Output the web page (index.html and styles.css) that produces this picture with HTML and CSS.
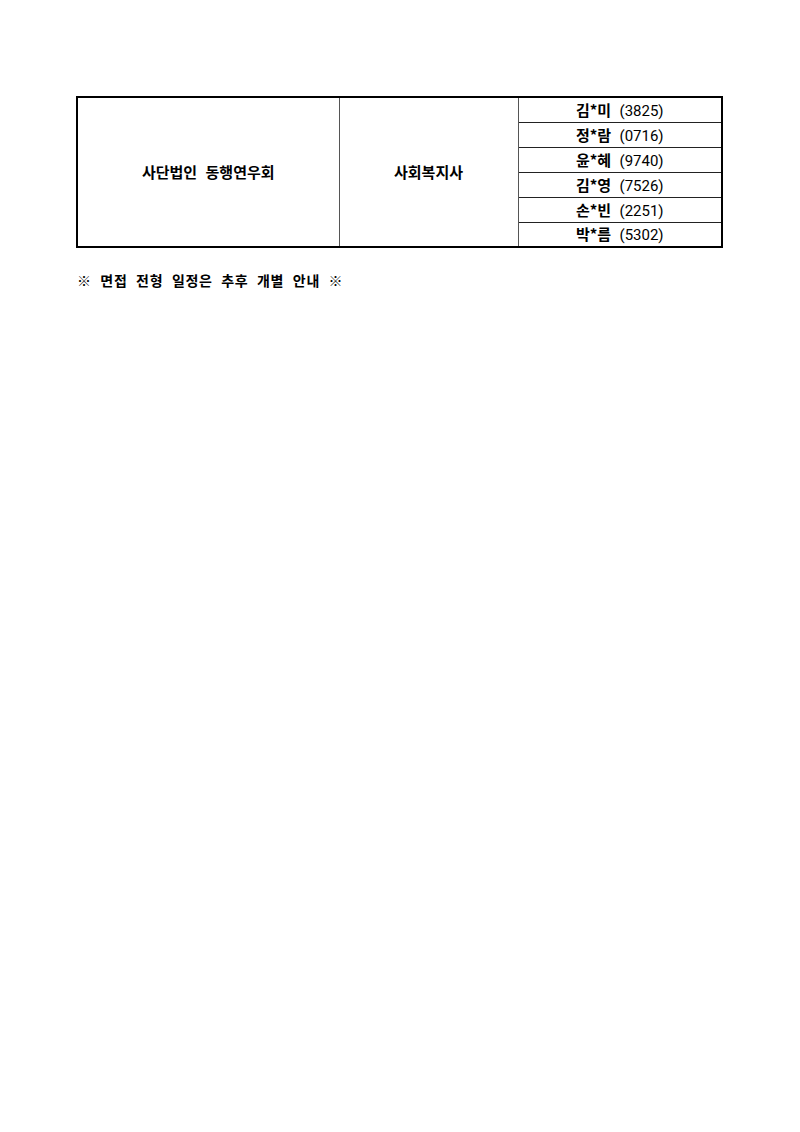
FILE: index.html
```html
<!DOCTYPE html>
<html lang="ko">
<head>
<meta charset="utf-8">
<link rel="stylesheet" href="styles.css">
</head>
<body>
<div class="page">
  <table class="list">
    <colgroup>
      <col class="c1"><col class="c2"><col class="c3">
    </colgroup>
    <tr>
      <td class="org" rowspan="6">사단법인&nbsp; 동행연우회</td>
      <td class="job" rowspan="6">사회복지사</td>
      <td class="name">김*미&nbsp; <span class="num">(3825)</span></td>
    </tr>
    <tr><td class="name">정*람&nbsp; <span class="num">(0716)</span></td></tr>
    <tr><td class="name">윤*혜&nbsp; <span class="num">(9740)</span></td></tr>
    <tr><td class="name">김*영&nbsp; <span class="num">(7526)</span></td></tr>
    <tr><td class="name">손*빈&nbsp; <span class="num">(2251)</span></td></tr>
    <tr><td class="name">박*름&nbsp; <span class="num">(5302)</span></td></tr>
  </table>
  <p class="note">※ 면접 전형 일정은 추후 개별 안내 ※</p>
</div>
</body>
</html>
```

FILE: styles.css
```css
html, body {
  margin: 0;
  padding: 0;
  background: #fff;
}
body {
  font-family: "Noto Sans CJK KR", "Noto Sans", sans-serif;
  color: #000;
}
.page {
  padding: 96px 0 0 76px;
}
.list {
  border-collapse: collapse;
  width: 645px;
  border: 2px solid #000;
  table-layout: fixed;
}
.c1 { width: 262px; }
.c2 { width: 179px; }
.c3 { width: 204px; }
.list td {
  border: 1px solid #555;
  text-align: center;
  padding: 0;
  font-size: 15px;
  font-weight: 700;
  line-height: 18px;
}
.list td.name {
  height: 24px;
  border-color: #222;
}
.list tr:last-child td.name {
  height: 23px;
}
.num {
  font-family: "Roboto", "Liberation Sans", sans-serif;
  font-weight: 400;
  font-size: 15px;
}
.note {
  margin: 22px 0 0 1px;
  font-size: 14px;
  font-weight: 700;
  word-spacing: 4px;
  letter-spacing: 0.7px;
}
```
